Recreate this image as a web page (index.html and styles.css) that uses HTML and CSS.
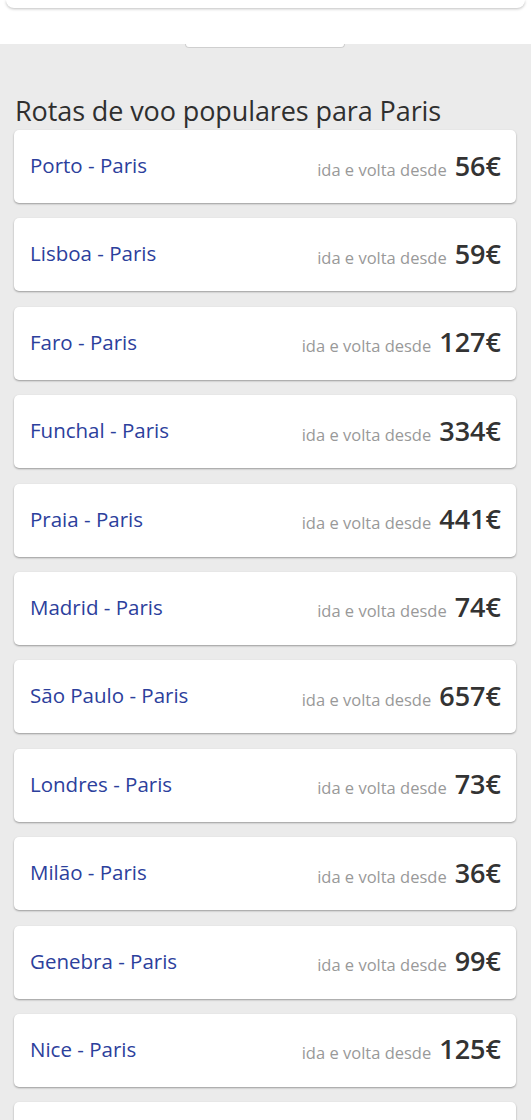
FILE: index.html
```html
<!DOCTYPE html>
<html lang="pt">
<head>
<meta charset="UTF-8">
<meta name="viewport" content="width=device-width, initial-scale=1.0">
<title>Rotas de voo populares para Paris</title>
<link rel="stylesheet" href="styles.css">
</head>
<body>
    <div class="top">
        <div class="top-card"></div>
    </div>
    <div class="tab-wrap">
        <div class="tab"></div>
    </div>

    <div class="routes">
        <h2>Rotas de voo populares para Paris</h2>

        <a class="route" href="#">
            <span class="route-name">Porto - Paris</span>
            <span class="route-price"><span class="from">ida e volta desde</span> <span class="price">56€</span></span>
        </a>
        <a class="route" href="#">
            <span class="route-name">Lisboa - Paris</span>
            <span class="route-price"><span class="from">ida e volta desde</span> <span class="price">59€</span></span>
        </a>
        <a class="route" href="#">
            <span class="route-name">Faro - Paris</span>
            <span class="route-price"><span class="from">ida e volta desde</span> <span class="price">127€</span></span>
        </a>
        <a class="route" href="#">
            <span class="route-name">Funchal - Paris</span>
            <span class="route-price"><span class="from">ida e volta desde</span> <span class="price">334€</span></span>
        </a>
        <a class="route" href="#">
            <span class="route-name">Praia - Paris</span>
            <span class="route-price"><span class="from">ida e volta desde</span> <span class="price">441€</span></span>
        </a>
        <a class="route" href="#">
            <span class="route-name">Madrid - Paris</span>
            <span class="route-price"><span class="from">ida e volta desde</span> <span class="price">74€</span></span>
        </a>
        <a class="route" href="#">
            <span class="route-name">São Paulo - Paris</span>
            <span class="route-price"><span class="from">ida e volta desde</span> <span class="price">657€</span></span>
        </a>
        <a class="route" href="#">
            <span class="route-name">Londres - Paris</span>
            <span class="route-price"><span class="from">ida e volta desde</span> <span class="price">73€</span></span>
        </a>
        <a class="route" href="#">
            <span class="route-name">Milão - Paris</span>
            <span class="route-price"><span class="from">ida e volta desde</span> <span class="price">36€</span></span>
        </a>
        <a class="route" href="#">
            <span class="route-name">Genebra - Paris</span>
            <span class="route-price"><span class="from">ida e volta desde</span> <span class="price">99€</span></span>
        </a>
        <a class="route" href="#">
            <span class="route-name">Nice - Paris</span>
            <span class="route-price"><span class="from">ida e volta desde</span> <span class="price">125€</span></span>
        </a>
        <!-- next card, only its top edge is visible -->
        <div class="route"></div>
    </div>
</body>
</html>
```

FILE: styles.css
```css
body {
    font-family: "Open Sans", "Noto Sans", sans-serif;
    background-color: #ebebeb;
    margin: 0;
    padding: 0;
}

/* Top white area */
.top {
    background-color: #fff;
    height: 44px;
    padding: 0 6px;
    box-sizing: border-box;
}
.top-card {
    height: 8px;
    background-color: #fff;
    border-radius: 0 0 8px 8px;
    box-shadow: 0 1px 3px rgba(0, 0, 0, 0.25);
}
.tab-wrap {
    display: flex;
    justify-content: center;
    padding-right: 1px;
}
.tab {
    width: 158px;
    height: 3px;
    background-color: #fff;
    border: 1px solid #cfcfcf;
    border-top: none;
    border-radius: 0 0 6px 6px;
}

/* Routes list */
.routes {
    padding: 0 15px 0 14px;
}
.routes h2 {
    font-size: 27px;
    font-weight: 400;
    color: #2f2f2f;
    margin: 45px 0 0 1px;
    padding-bottom: 2px;
    line-height: 35px;
    letter-spacing: -0.1px;
}
.route {
    display: flex;
    align-items: center;
    justify-content: space-between;
    height: 73px;
    margin-bottom: 15.4px;
    padding: 0 15px 3px 16px;
    background-color: #fff;
    border-radius: 5px;
    box-shadow: 0 1px 2px rgba(0, 0, 0, 0.35);
    text-decoration: none;
    box-sizing: border-box;
}
.route-name {
    font-size: 20.5px;
    color: #2c409c;
}
.route-price {
    display: flex;
    align-items: baseline;
}
.from {
    font-size: 16.5px;
    color: #999;
    margin-right: 8px;
}
.price {
    font-size: 27px;
    font-weight: 600;
    color: #333;
}
```
